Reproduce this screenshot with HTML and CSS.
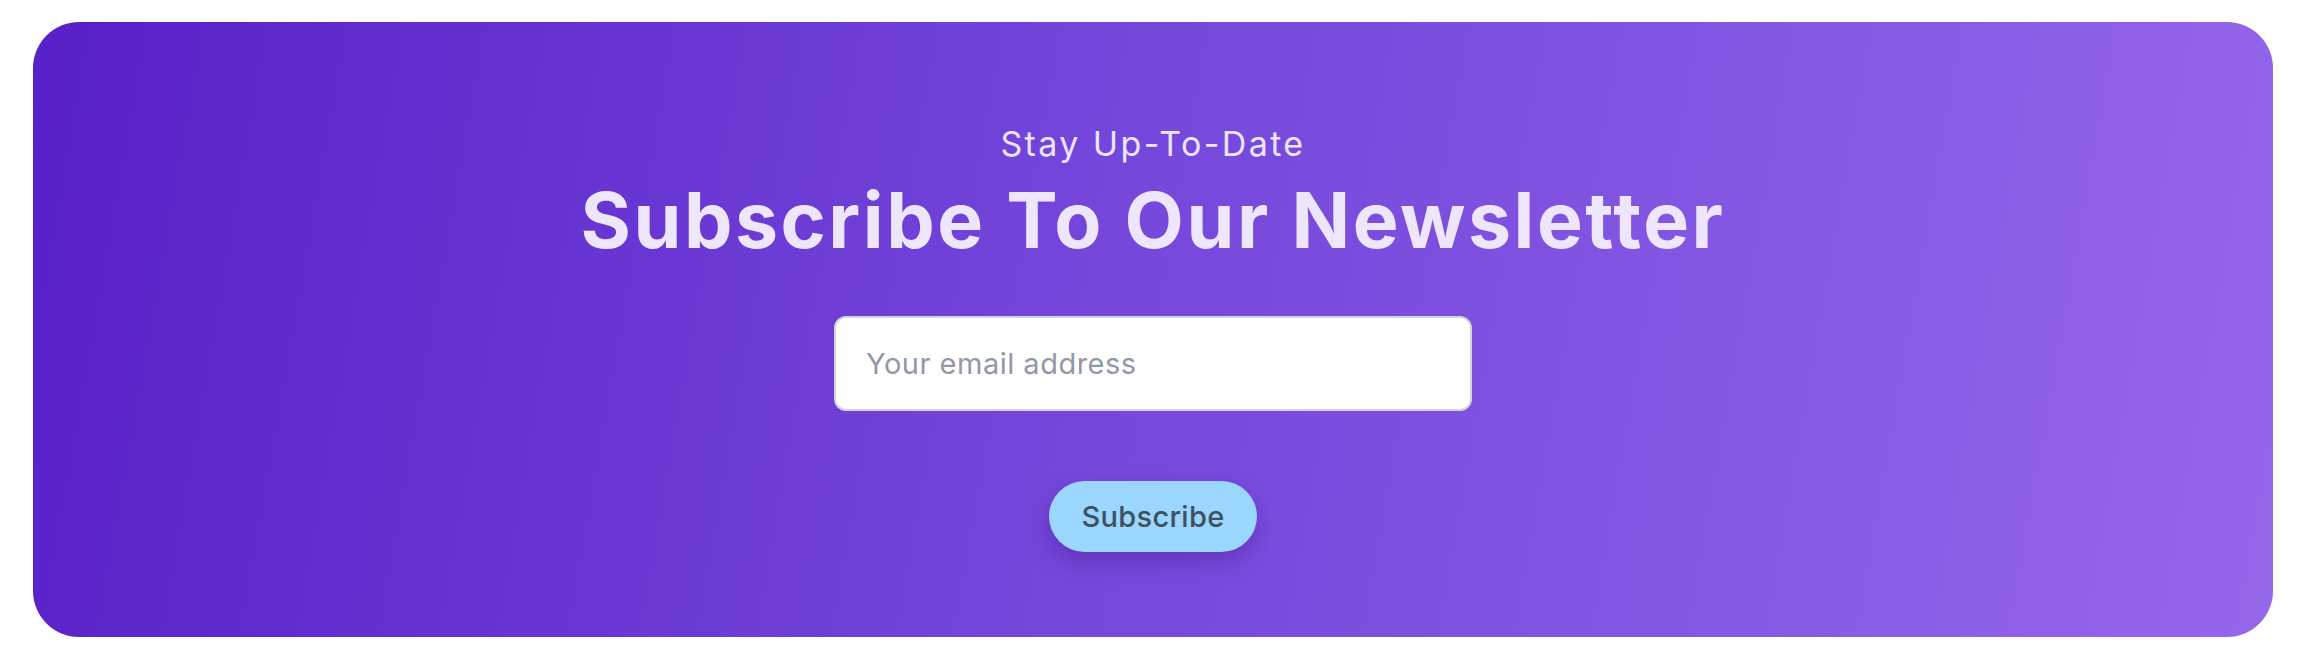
FILE: index.html
```html
<!DOCTYPE html>
<html lang="en">
<head>
<meta charset="utf-8">
<title>Newsletter</title>
<link rel="stylesheet" href="styles.css">
</head>
<body>
  <section class="newsletter">
    <p class="eyebrow">Stay Up-To-Date</p>
    <h2 class="title">Subscribe To Our Newsletter</h2>
    <form class="form">
      <input class="email" type="email" placeholder="Your email address">
      <button class="btn" type="button">Subscribe</button>
    </form>
  </section>
</body>
</html>
```
FILE: styles.css
```css
html, body {
  margin: 0;
  background: #ffffff;
}
body {
  padding: 22px 41px 31px 33px;
  font-family: "Inter", "Liberation Sans", sans-serif;
}
.newsletter {
  box-sizing: border-box;
  height: 615px;
  border-radius: 46px;
  background: linear-gradient(100deg, #5720c8 0%, #7345da 45%, #9467eb 100%);
  display: flex;
  flex-direction: column;
  align-items: center;
  padding-top: 102px;
}
.eyebrow {
  margin: 0;
  font-size: 34px;
  line-height: 40px;
  font-weight: 400;
  letter-spacing: 2.4px;
  color: #ece4fd;
}
.title {
  margin: 11px 0 0;
  font-size: 77px;
  line-height: 90px;
  font-weight: 700;
  letter-spacing: 2.5px;
  color: #ede6fc;
}
.form {
  display: flex;
  flex-direction: column;
  align-items: center;
  margin-top: 51px;
}
.email {
  box-sizing: border-box;
  width: 638px;
  height: 95px;
  border: 2px solid #d3d3d8;
  border-radius: 12px;
  background: #ffffff;
  padding: 0 30px;
  font-family: inherit;
  font-size: 29px;
  letter-spacing: 0.5px;
  color: #333;
  outline: none;
}
.email::placeholder {
  color: #9198a8;
}
.btn {
  margin-top: 70px;
  width: 208px;
  height: 71px;
  border: none;
  border-radius: 36px;
  background: #9ad6fe;
  color: #3e5160;
  font-family: inherit;
  font-size: 29px;
  font-weight: 500;
  letter-spacing: 0.3px;
  box-shadow: 0 10px 22px rgba(60, 20, 130, 0.35);
  cursor: pointer;
}
```
